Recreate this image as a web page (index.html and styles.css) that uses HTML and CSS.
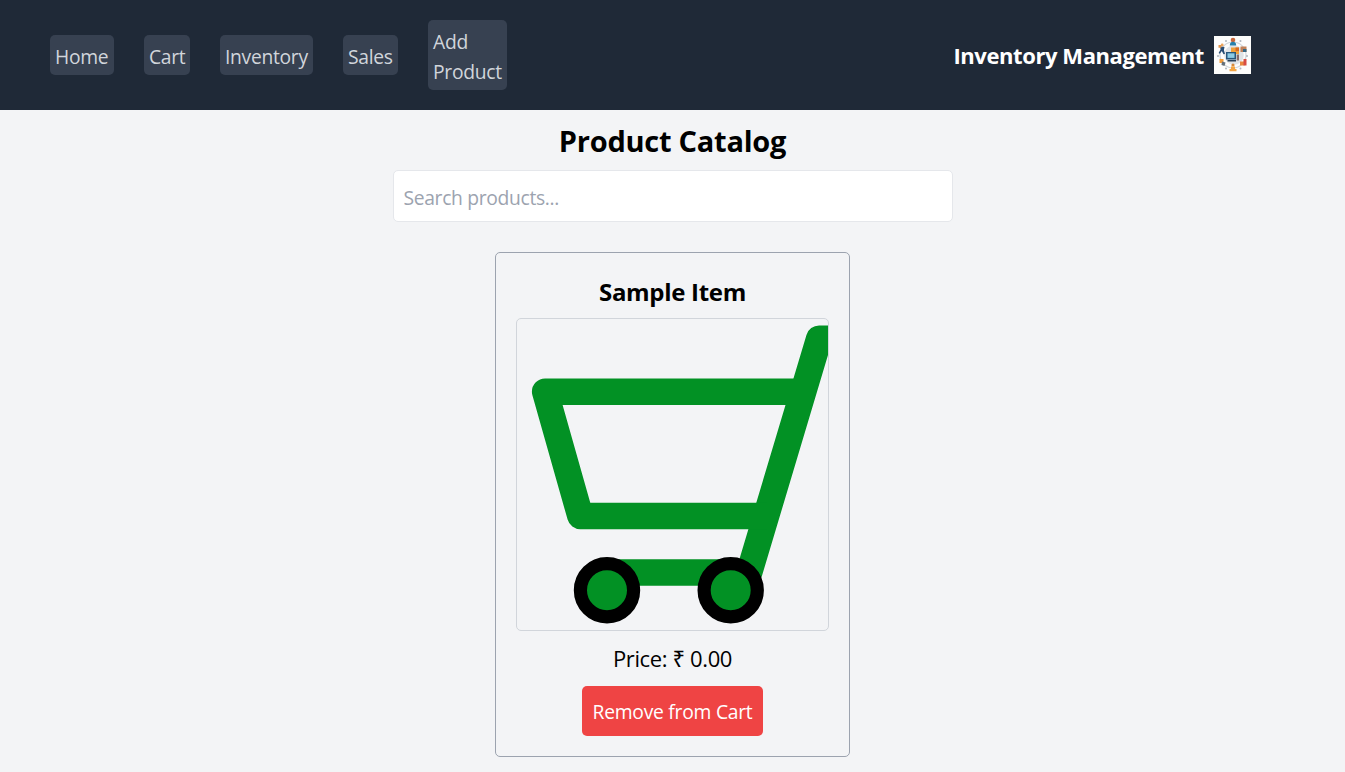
FILE: index.html
```html
<!DOCTYPE html>
<html lang="en">
<head>
<meta charset="utf-8">
<title>Inventory Management</title>
<link rel="stylesheet" href="styles.css">
</head>
<body>
<header class="header">
  <nav class="nav">
    <a class="nav-link home"><span>Home</span></a>
    <a class="nav-link cart"><span>Cart</span></a>
    <a class="nav-link inventory"><span>Inventory</span></a>
    <a class="nav-link sales"><span>Sales</span></a>
    <a class="nav-link add"><span>Add<br>Product</span></a>
  </nav>
  <div class="brand">
    <span class="brand-name">Inventory Management</span>
    <svg class="logo" viewBox="0 0 37 38">
      <rect width="37" height="38" fill="#fdfdfc"/>
      <circle cx="19" cy="19" r="13" fill="none" stroke="#cfd5da" stroke-width="1.2"/>
      <circle cx="20" cy="19" r="9.8" fill="#dfe3e6"/>
      <path d="M17 11.5h8V18h-8z" fill="#f0a03c"/>
      <path d="M21.5 11.5H25V15h-3.5z" fill="#d96b25"/>
      <rect x="12" y="16" width="10" height="7.5" fill="#27577d"/>
      <rect x="13.5" y="17.3" width="7" height="4.6" fill="#8ccbe6"/>
      <path d="M13.5 24H22v1.5h-8.5z" fill="#28425b"/>
      <path d="M22.7 18.5H25v6h-2.3z" fill="#866a68"/>
      <circle cx="19" cy="4" r="2.3" fill="#c8683c"/>
      <path d="M15.8 9.5q0-3.7 3.2-3.7t3.2 3.7z" fill="#2680ac"/>
      <circle cx="8.2" cy="9" r="1.4" fill="#eda55b"/>
      <path d="M6 10.5l4.5.5-.6 3 1.1 4-1.5.2-1.7-3.2-2 2.8-1.2-.8 2-3.5z" fill="#284d74"/>
      <path d="M4.5 9h2.8v2.8H4.5z" fill="#e2954c"/>
      <path d="M26.5 10.5h6v5.5h-6z" fill="#c08158"/>
      <path d="M29 13h3.5v3H29z" fill="#356884"/>
      <path d="M5.5 23h4v4h-4z" fill="#f29d3b"/>
      <path d="M8 25.5l3.5 1-1 3.5-3-1z" fill="#65717a"/>
      <path d="M26 25.5h4.5v4H26z" fill="#e9893e"/>
      <path d="M29.5 23h3v6.5h-3z" fill="#d84c43"/>
      <circle cx="19" cy="29" r="1.6" fill="#d78a3b"/>
      <path d="M17 30.5h4V33h1.5v2.3h-7V33H17z" fill="#f3a543"/>
      <g fill="#aeb5bd"><circle cx="12" cy="5" r="1"/><circle cx="26.5" cy="5" r="1"/><circle cx="4" cy="20" r="1"/><circle cx="33" cy="20" r="1"/><circle cx="12" cy="32.5" r="1"/><circle cx="26.5" cy="32.5" r="1"/></g>
    </svg>
  </div>
</header>
<main class="main">
  <h1 class="title"><span>Product Catalog</span></h1>
  <input class="search" type="text" placeholder="Search products...">
  <article class="card">
    <h2 class="item-name"><span>Sample Item</span></h2>
    <svg class="picture" viewBox="517 319 311 311">
      <g fill="none" stroke="#029124" stroke-width="26.4" stroke-linejoin="round">
        <path d="M850 338.7H819.1L749.2 572.5H607"/>
        <path d="M804 391.7H545.1L580.3 516H767"/>
      </g>
      <g fill="#029124" stroke="#000" stroke-width="13.2">
        <circle cx="607" cy="590.2" r="26.6"/>
        <circle cx="730.7" cy="590.2" r="26.6"/>
      </g>
    </svg>
    <p class="price"><span>Price: ₹ 0.00</span></p>
    <button class="remove"><span>Remove from Cart</span></button>
  </article>
</main>
</body>
</html>
```
FILE: styles.css
```css
* { box-sizing: border-box; margin: 0; }
body {
  min-height: 772px;
  background: #f3f4f6;
  color: #000;
  font: 19.3px/30px "Open Sans", "Noto Sans", sans-serif;
  letter-spacing: -0.3px;
  overflow: hidden;
}
.header {
  height: 110px;
  padding: 20px 94px 20px 50px;
  display: flex;
  align-items: center;
  justify-content: space-between;
  background: #1f2937;
}
.nav { display: flex; align-items: center; gap: 30px; }
.nav-link {
  padding: 7px 0 3px 5px;
  border-radius: 5px;
  background: #374151;
  color: #d1d5db;
  white-space: nowrap;
}
.home { width: 64px; }
.cart { width: 46px; }
.inventory { width: 93px; }
.sales { width: 55px; }
.add { width: 79px; }
.brand { display: flex; align-items: center; gap: 10px; color: #fff; }
.brand-name { padding-bottom: 1px; font-size: 22px; font-weight: 700; letter-spacing: -0.42px; }
.logo { width: 37px; height: 38px; }
.main { display: flex; flex-direction: column; align-items: center; padding-top: 10px; }
.title { font-size: 29px; line-height: 42px; height: 50px; letter-spacing: -0.25px; }
.search {
  width: 560px;
  height: 52px;
  padding: 2px 10px 0;
  border: 1px solid #e5e7eb;
  border-radius: 5px;
  background: #fff;
  font: inherit;
  letter-spacing: -0.33px;
}
.search::placeholder { color: #9ca3af; opacity: 1; }
.card {
  width: 355px;
  height: 505px;
  margin-top: 30px;
  padding: 20px;
  border: 1px solid #9ca3af;
  border-radius: 5px;
  display: flex;
  flex-direction: column;
  align-items: center;
}
.item-name { font-size: 24px; line-height: 38px; height: 45px; }
.picture {
  width: 313px;
  height: 313px;
  border: 1px solid #d1d5db;
  border-radius: 5px;
  overflow: hidden;
}
.price { font-size: 22px; line-height: 35px; height: 55px; padding-top: 10px; letter-spacing: -0.37px; }
.remove {
  width: 181px;
  height: 50px;
  padding: 2px 0 0;
  border: 0;
  border-radius: 5px;
  background: #ef4444;
  color: #fff;
  font: inherit;
  letter-spacing: -0.26px;
  white-space: nowrap;
}
```
